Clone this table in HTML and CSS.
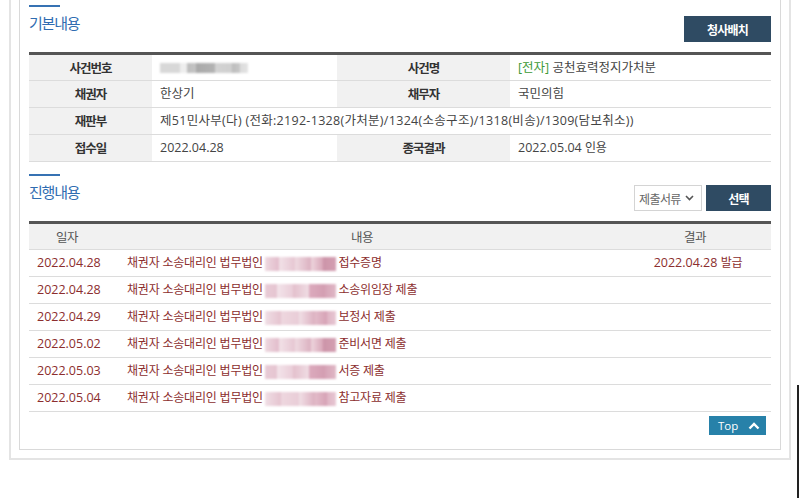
FILE: index.html
```html
<!DOCTYPE html>
<html lang="ko">
<head>
<meta charset="utf-8">
<title>사건 상세</title>
<link rel="stylesheet" href="styles.css">
</head>
<body>
<div class="frame">
  <div class="panel">
    <section class="sec">
      <div class="sec-head">
        <h2 class="sec-title">기본내용</h2>
        <button class="btn-dark btn-wide">청사배치</button>
      </div>
      <table class="info">
        <colgroup>
          <col class="c-l1"><col class="c-v1"><col class="c-l2"><col>
        </colgroup>
        <tr>
          <th>사건번호</th>
          <td><span class="blur-num"></span></td>
          <th>사건명</th>
          <td><span class="green">[전자]</span> 공천효력정지가처분</td>
        </tr>
        <tr>
          <th>채권자</th>
          <td>한상기</td>
          <th>채무자</th>
          <td>국민의힘</td>
        </tr>
        <tr>
          <th>재판부</th>
          <td colspan="3" class="wide">제51민사부(다) (전화:2192-1328(가처분)/1324(소송구조)/1318(비송)/1309(담보취소))</td>
        </tr>
        <tr>
          <th>접수일</th>
          <td>2022.04.28</td>
          <th>종국결과</th>
          <td>2022.05.04 <span class="k">인용</span></td>
        </tr>
      </table>
    </section>

    <section class="sec sec2">
      <div class="sec-head">
        <h2 class="sec-title">진행내용</h2>
        <div class="controls">
          <div class="select">
            <span>제출서류</span>
            <svg width="9" height="6" viewBox="0 0 9 6"><path d="M1 1 L4.5 4.5 L8 1" fill="none" stroke="#555" stroke-width="1.6"/></svg>
          </div>
          <button class="btn-dark btn-sel">선택</button>
        </div>
      </div>
      <table class="prog">
        <colgroup>
          <col class="c-date"><col class="c-cont"><col>
        </colgroup>
        <tr class="hd">
          <th>일자</th><th>내용</th><th>결과</th>
        </tr>
        <tr>
          <td class="date">2022.04.28</td>
          <td class="cont"><span class="k">채권자 소송대리인 법무법인</span> <span class="blur-name"></span> <span class="k">접수증명</span></td>
          <td class="res">2022.04.28 <span class="k">발급</span></td>
        </tr>
        <tr>
          <td class="date">2022.04.28</td>
          <td class="cont"><span class="k">채권자 소송대리인 법무법인</span> <span class="blur-name v2"></span> <span class="k">소송위임장 제출</span></td>
          <td class="res"></td>
        </tr>
        <tr>
          <td class="date">2022.04.29</td>
          <td class="cont"><span class="k">채권자 소송대리인 법무법인</span> <span class="blur-name v3"></span> <span class="k">보정서 제출</span></td>
          <td class="res"></td>
        </tr>
        <tr>
          <td class="date">2022.05.02</td>
          <td class="cont"><span class="k">채권자 소송대리인 법무법인</span> <span class="blur-name"></span> <span class="k">준비서면 제출</span></td>
          <td class="res"></td>
        </tr>
        <tr>
          <td class="date">2022.05.03</td>
          <td class="cont"><span class="k">채권자 소송대리인 법무법인</span> <span class="blur-name v2"></span> <span class="k">서증 제출</span></td>
          <td class="res"></td>
        </tr>
        <tr>
          <td class="date">2022.05.04</td>
          <td class="cont"><span class="k">채권자 소송대리인 법무법인</span> <span class="blur-name v3"></span> <span class="k">참고자료 제출</span></td>
          <td class="res"></td>
        </tr>
      </table>
      <div class="top-row">
        <a class="top-btn" href="#">Top
          <svg width="12" height="8" viewBox="0 0 12 8"><path d="M1.5 6.5 L6 2 L10.5 6.5" fill="none" stroke="#fff" stroke-width="2.4"/></svg>
        </a>
      </div>
    </section>
  </div>
</div>
<div class="edge"></div>
</body>
</html>
```
FILE: styles.css
```css
*, *::before, *::after {
  box-sizing: border-box;
}
html, body {
  margin: 0;
  padding: 0;
  background: #fff;
}
body {
  position: relative;
  height: 498px;
  overflow: hidden;
  font-family: "Open Sans", "Noto Sans CJK KR", sans-serif;
  font-size: 12.5px;
  color: #444;
}
.frame {
  margin-left: 9px;
  width: 782px;
  border: 2px solid #e4e4e4;
  border-top: none;
  padding: 0 8px 8px 8px;
}
.panel {
  width: 762px;
  border: 1px solid #d9d9d9;
  border-top: none;
  padding: 0 9px 14px 9px;
}
.sec-head {
  display: flex;
  justify-content: space-between;
  align-items: flex-start;
  height: 52px;
}
.sec2 {
  margin-top: 7px;
}
.sec-title {
  margin: 0;
  padding-top: 5px;
  font-family: "Noto Sans CJK KR", sans-serif;
  font-weight: normal;
  font-size: 15px;
  letter-spacing: -1.2px;
  color: #2f6cb1;
  line-height: 20px;
}
.sec-title::before {
  content: "";
  display: block;
  width: 31px;
  height: 2px;
  background: #3672b3;
  margin-bottom: 6px;
}
.btn-dark {
  border: none;
  background: #2f4b63;
  color: #fff;
  font-family: "Noto Sans CJK KR", sans-serif;
  font-weight: bold;
  font-size: 12px;
  letter-spacing: -0.8px;
  height: 26px;
  padding: 0;
  margin: 0;
}
.btn-wide {
  width: 87px;
  margin-top: 16px;
}
.controls {
  display: flex;
  gap: 4px;
  margin-top: 16px;
}
.select {
  width: 68px;
  height: 26px;
  border: 1px solid #d4d4d4;
  background: #fff;
  display: flex;
  align-items: center;
  padding-left: 4px;
  gap: 4px;
  color: #666;
  font-family: "Noto Sans CJK KR", sans-serif;
  font-size: 12px;
  letter-spacing: -0.6px;
}
.btn-sel {
  width: 65px;
}
table {
  width: 742px;
  border-collapse: collapse;
  border-top: 3px solid #555;
  table-layout: fixed;
}
th, td {
  height: 27px;
  padding: 0;
  border-bottom: 1px solid #dcdcdc;
  line-height: 18px;
}
.info th {
  background: #f1f1f1;
  color: #333;
  font-family: "Noto Sans CJK KR", sans-serif;
  font-weight: bold;
  font-size: 12.5px;
  letter-spacing: -1px;
  text-align: center;
}
.info td {
  padding-left: 8px;
  white-space: nowrap;
  color: #444;
}
.info td.wide {
  letter-spacing: 0.3px;
}
.c-l1 { width: 123px; }
.c-v1 { width: 185px; }
.c-l2 { width: 173px; }
.green { color: #3d9a35; }
.k {
  font-size: 12px;
  letter-spacing: -0.2px;
}
.blur-num {
  display: inline-block;
  vertical-align: middle;
  width: 88px;
  height: 10px;
  filter: blur(1.2px);
  background:
    linear-gradient(to right,
      #d8d8d8 0, #d8d8d8 20px,
      #eee 20px, #eee 27px,
      #bdbdbd 27px, #c4c4c4 36px,
      #a9a9a9 36px, #b3b3b3 55px,
      #d3d3d3 55px, #cfcfcf 72px,
      #bcbcbc 72px, #c8c8c8 80px,
      #dcdcdc 80px, #e4e4e4 88px);
}
.prog .hd th {
  background: #f1f1f1;
  color: #555;
  font-family: "Noto Sans CJK KR", sans-serif;
  font-weight: normal;
  font-size: 12.5px;
  letter-spacing: -0.6px;
  text-align: center;
}
.c-date { width: 76px; }
.c-cont { width: 514px; }
.prog td {
  color: #8c2e2e;
  white-space: nowrap;
}
.prog td.date {
  padding-left: 8px;
}
.prog td.cont {
  padding-left: 22px;
}
.prog td.res {
  text-align: center;
  padding-left: 6px;
}
.blur-name {
  display: inline-block;
  vertical-align: middle;
  width: 71px;
  height: 14px;
  margin: 0 -1px;
  filter: blur(1px);
  background:
    linear-gradient(to right,
      #eed9e0 0, #e2bccb 14px,
      #f2e2e8 14px, #e6c6d2 30px,
      #efdbe2 30px, #dbb0c0 46px,
      #eed6de 46px, #d8a6b8 58px,
      #cc94a8 58px, #d49fb2 71px);
}
.blur-name.v2 {
  background:
    linear-gradient(to right,
      #e8cbd6 0, #e6c5d1 12px,
      #f3e4ea 12px, #eacdd8 28px,
      #e3bfcc 28px, #f0dde4 44px,
      #dcaabd 44px, #d39db1 60px,
      #d6a3b6 60px, #e0b8c6 71px);
}
.blur-name.v3 {
  background:
    linear-gradient(to right,
      #f0dee5 0, #e5c3cf 16px,
      #eed7df 16px, #e9cdd7 34px,
      #f1e0e6 34px, #dcb0c0 50px,
      #e3bcca 50px, #d6a2b5 62px,
      #dfb4c4 62px, #e8c8d4 71px);
}
.top-row {
  display: flex;
  justify-content: flex-end;
  padding: 4px 5px 0 0;
}
.top-btn {
  display: flex;
  align-items: center;
  justify-content: space-between;
  width: 57px;
  height: 19px;
  padding: 0 6px 0 9px;
  background: #2781a9;
  color: #fff;
  text-decoration: none;
  font-family: "Open Sans", sans-serif;
  font-size: 11.5px;
  line-height: 19px;
}
.edge {
  position: absolute;
  left: 797px;
  top: 385px;
  width: 2px;
  height: 113px;
  background: #222;
}
```
